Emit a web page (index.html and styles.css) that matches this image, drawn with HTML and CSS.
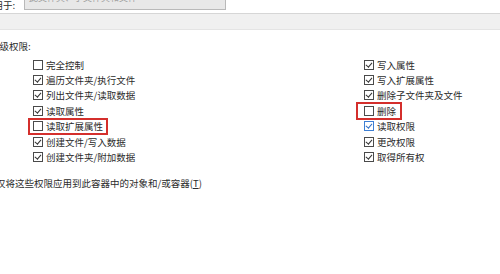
FILE: index.html
```html
<!DOCTYPE html>
<html lang="zh-CN">
  <head>
    <meta charset="UTF-8" />
    <title>权限项目</title>
    <link rel="stylesheet" href="styles.css">
  </head>
  <body>
    <div class="dialog">
      <div class="apply-row">
        <span class="label">应用于:</span>
        <div class="combo">此文件夹、子文件夹和文件</div>
      </div>

      <div class="bar"></div>

      <p class="heading">高级权限:</p>

      <div class="perms">
        <label class="item"><span class="box"></span>完全控制</label>
        <label class="item"><span class="box on"></span>写入属性</label>

        <label class="item"><span class="box on"></span>遍历文件夹/执行文件</label>
        <label class="item"><span class="box on"></span>写入扩展属性</label>

        <label class="item"><span class="box on"></span>列出文件夹/读取数据</label>
        <label class="item"><span class="box on"></span>删除子文件夹及文件</label>

        <label class="item"><span class="box on"></span>读取属性</label>
        <label class="item mark mark-right"><span class="box"></span>删除</label>

        <label class="item mark mark-left"><span class="box"></span>读取扩展属性</label>
        <label class="item"><span class="box on blue"></span>读取权限</label>

        <label class="item"><span class="box on"></span>创建文件/写入数据</label>
        <label class="item"><span class="box on"></span>更改权限</label>

        <label class="item"><span class="box on"></span>创建文件夹/附加数据</label>
        <label class="item"><span class="box on"></span>取得所有权</label>
      </div>

      <p class="only">仅将这些权限应用到此容器中的对象和/或容器(<u>T</u>)</p>
    </div>
  </body>
</html>
```

FILE: styles.css
```css
body {
  margin: 0;
  background: #fff;
  font-family: "Noto Sans CJK SC", "Noto Sans", sans-serif;
  font-size: 9.5px;
  color: #2b2b2b;
  overflow: hidden;
}

.dialog {
  width: 500px;
  height: 274px;
  overflow: hidden;
}

.apply-row {
  display: flex;
  align-items: flex-end;
  height: 10px;
  margin-left: -16px;
}

.label {
  line-height: 10px;
  width: 40px;
}

.combo {
  width: 202px;
  height: 16px;
  margin-top: -7px;
  box-sizing: border-box;
  background: #e8e8e8;
  border: 1px solid #b9b9b9;
  color: #a0a0a0;
  font-size: 9px;
  line-height: 6px;
  padding-left: 4px;
}

.bar {
  margin-top: 3px;
  height: 15px;
  background: #f0f0f0;
  border-top: 1px solid #d6d6d6;
  border-bottom: 1px solid #e4e4e4;
}

.heading {
  margin: 10px 0 0 -10px;
  line-height: 12px;
}

.perms {
  display: grid;
  grid-template-columns: 331px 1fr;
  padding-left: 33px;
  margin-top: 5px;
}

.item {
  display: flex;
  align-items: center;
  justify-self: start;
  height: 15.4px;
  gap: 3px;
  white-space: nowrap;
}

.box {
  position: relative;
  width: 8px;
  height: 8px;
  border: 1px solid #4a4a4a;
  background: #fff;
}

.box.on::after {
  content: "";
  position: absolute;
  left: 2px;
  top: 0px;
  width: 2.5px;
  height: 5px;
  border-right: 1.2px solid #333;
  border-bottom: 1.2px solid #333;
  transform: rotate(40deg);
}

.box.blue {
  border-color: #3d7fd4;
}

.box.blue::after {
  border-color: #2f6fc6;
}

.mark {
  outline: 2px solid #d42f2c;
  outline-offset: -1px;
}

.mark-left {
  margin-left: -4px;
  padding: 0 4px;
}

.mark-right {
  margin-left: -7px;
  padding: 0 5px 0 7px;
}

.only {
  margin: 12px 0 0 -4px;
  line-height: 12px;
}
```
